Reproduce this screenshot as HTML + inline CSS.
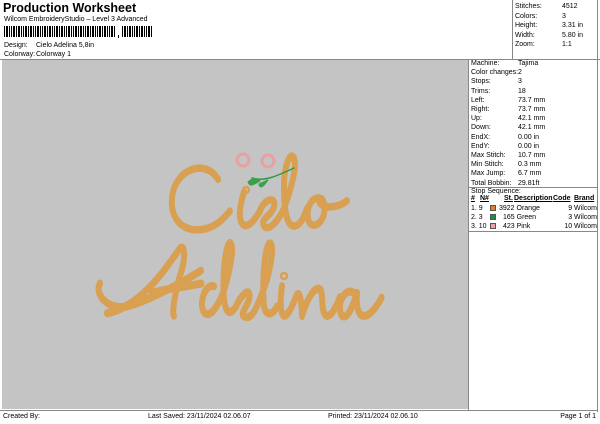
<!DOCTYPE html>
<html><head><style>
*{margin:0;padding:0;box-sizing:border-box}
body{width:600px;height:424px;background:#fff;font-family:"Liberation Sans",sans-serif;font-size:7px;color:#000;position:relative;overflow:hidden}
.a{position:absolute;white-space:nowrap}
</style></head><body>
<div class="a" style="left:3px;top:1px;font-size:12.5px;font-weight:bold">Production Worksheet</div>
<div class="a" style="left:4px;top:16px">Wilcom EmbroideryStudio – Level 3 Advanced</div>
<svg class="a" style="left:4px;top:26px" width="150" height="14">
<g fill="#000">
<rect x="0" y="0" width="1" height="11"/><rect x="2" y="0" width="2" height="11"/><rect x="5" y="0" width="1" height="11"/><rect x="7" y="0" width="1" height="11"/><rect x="9" y="0" width="2" height="11"/><rect x="12" y="0" width="1" height="11"/><rect x="14" y="0" width="2" height="11"/><rect x="17" y="0" width="1" height="11"/><rect x="19" y="0" width="1" height="11"/><rect x="21" y="0" width="2" height="11"/><rect x="24" y="0" width="1" height="11"/><rect x="26" y="0" width="2" height="11"/><rect x="29" y="0" width="1" height="11"/><rect x="31" y="0" width="1" height="11"/><rect x="33" y="0" width="2" height="11"/><rect x="36" y="0" width="1" height="11"/><rect x="38" y="0" width="1" height="11"/><rect x="40" y="0" width="2" height="11"/><rect x="43" y="0" width="1" height="11"/><rect x="45" y="0" width="2" height="11"/><rect x="48" y="0" width="1" height="11"/><rect x="50" y="0" width="1" height="11"/><rect x="52" y="0" width="2" height="11"/><rect x="55" y="0" width="1" height="11"/><rect x="57" y="0" width="2" height="11"/><rect x="60" y="0" width="1" height="11"/><rect x="62" y="0" width="1" height="11"/><rect x="64" y="0" width="2" height="11"/><rect x="67" y="0" width="1" height="11"/><rect x="69" y="0" width="1" height="11"/><rect x="71" y="0" width="2" height="11"/><rect x="74" y="0" width="1" height="11"/><rect x="76" y="0" width="2" height="11"/><rect x="79" y="0" width="1" height="11"/><rect x="81" y="0" width="1" height="11"/><rect x="83" y="0" width="2" height="11"/><rect x="86" y="0" width="1" height="11"/><rect x="88" y="0" width="2" height="11"/><rect x="91" y="0" width="1" height="11"/><rect x="93" y="0" width="1" height="11"/><rect x="95" y="0" width="2" height="11"/><rect x="98" y="0" width="1" height="11"/><rect x="100" y="0" width="2" height="11"/><rect x="103" y="0" width="1" height="11"/><rect x="105" y="0" width="1" height="11"/><rect x="107" y="0" width="2" height="11"/><rect x="110" y="0" width="1" height="11"/>
<rect x="114" y="9" width="1" height="3"/>
<rect x="118" y="0" width="1" height="11"/><rect x="120" y="0" width="2" height="11"/><rect x="123" y="0" width="1" height="11"/><rect x="125" y="0" width="2" height="11"/><rect x="128" y="0" width="1" height="11"/><rect x="130" y="0" width="1" height="11"/><rect x="132" y="0" width="2" height="11"/><rect x="135" y="0" width="1" height="11"/><rect x="137" y="0" width="2" height="11"/><rect x="140" y="0" width="1" height="11"/><rect x="142" y="0" width="1" height="11"/><rect x="144" y="0" width="2" height="11"/><rect x="147" y="0" width="1" height="11"/>
</g></svg>
<div class="a" style="left:4px;top:42px">Design:</div><div class="a" style="left:36px;top:42px">Cielo Adelina 5,8in</div>
<div class="a" style="left:4px;top:51px">Colorway:</div><div class="a" style="left:36px;top:51px">Colorway 1</div>
<div class="a" style="left:0;top:59px;width:600px;height:1px;background:#888"></div>
<div class="a" style="left:512px;top:0;width:1px;height:59px;background:#888"></div>
<div class="a" style="left:597px;top:0;width:1px;height:412px;background:#888"></div>
<div class="a" style="left:515px;top:2px;line-height:9.5px">Stitches:<br>Colors:<br>Height:<br>Width:<br>Zoom:</div>
<div class="a" style="left:562px;top:2px;line-height:9.5px">4512<br>3<br>3.31 in<br>5.80 in<br>1:1</div>
<div class="a" style="left:2px;top:60px;width:466px;height:349px;background:#c4c4c4"></div>
<div class="a" style="left:468px;top:60px;width:1px;height:350px;background:#888"></div>
<svg class="a" style="left:2px;top:60px" width="466" height="349">
<g fill="none" stroke-linecap="round" stroke-linejoin="round">
<g stroke="#d8a050" stroke-width="6" stroke-dasharray="1.3 1.4" transform="translate(0,-88.5) scale(1,1.26)">
<path d="M216 165 C205 150 180 155 172 172 C165 190 175 205 195 205 C210 205 220 198 228 190"/>
<path d="M242 175 C238 185 236 195 240 200 C245 205 252 198 258 190"/>
<path d="M258 190 C262 180 275 178 272 187 C268 195 258 196 262 202 C266 206 275 200 282 188 C290 170 295 155 292 148 C288 142 282 155 282 170 C282 190 285 202 292 202 C298 202 302 195 305 188"/>
<path d="M318 180 C308 178 302 192 308 200 C315 205 325 195 322 184 C320 178 316 180 318 184 C322 188 335 188 345 182"/>
</g>
<g stroke="#d8a050" stroke-width="6" stroke-dasharray="1.3 1.4" transform="translate(0,-138.3) scale(1,1.35)">
<path d="M98 268 C92 275 105 288 125 285 C150 280 185 265 200 258"/>
<path d="M105 290 C140 285 165 255 178 242 C183 238 184 250 178 262 C172 278 170 290 172 292"/>
<path d="M150 275 C165 272 185 270 200 268"/>
<path d="M212 270 C202 268 196 285 203 290 C210 294 220 280 225 265 C230 250 232 240 228 238 C224 238 220 260 222 280 C224 290 228 292 234 285"/>
<path d="M234 285 C240 275 250 270 247 280 C243 288 236 292 245 293 C252 293 258 280 265 265 C270 250 272 240 268 238 C262 240 260 270 262 285 C264 292 270 292 275 285"/>
<path d="M280 270 C278 280 278 290 282 292 C286 292 290 285 294 278 C298 270 300 285 300 292 C303 285 310 270 318 272 C322 276 318 290 325 292 C330 292 334 285 338 278"/>
<path d="M352 275 C342 270 334 285 340 292 C346 295 352 282 355 275 C354 285 356 292 362 292 C368 292 375 285 380 278"/>
</g>
<circle cx="244" cy="130" r="3" stroke="#d8a050" stroke-width="2.5" stroke-dasharray="1 1.2"/>
<circle cx="282" cy="216" r="3" stroke="#d8a050" stroke-width="2.5" stroke-dasharray="1 1.2"/>
<path d="M250 118 C262 122 275 116 292 108" stroke="#2e9a45" stroke-width="1.5"/>
<path d="M258 121 C252 124 248 128 246 122 C250 118 255 118 258 121Z M266 120 C262 126 258 130 257 124 Z" fill="#3aa04a" stroke="#3aa04a" stroke-width="1"/>
<circle cx="241" cy="100" r="6" stroke="#e8a0a0" stroke-width="3" stroke-dasharray="1.5 1.5"/>
<circle cx="266" cy="101" r="6" stroke="#e8a0a0" stroke-width="3" stroke-dasharray="1.5 1.5"/>
</g></svg>
<div class="a" style="left:471px;top:59px;line-height:9.2px">Machine:<br>Color changes:<br>Stops:<br>Trims:<br>Left:<br>Right:<br>Up:<br>Down:<br>EndX:<br>EndY:<br>Max Stitch:<br>Min Stitch:<br>Max Jump:<br>Total Bobbin:</div>
<div class="a" style="left:518px;top:59px;line-height:9.2px">Tajima<br>2<br>3<br>18<br>73.7 mm<br>73.7 mm<br>42.1 mm<br>42.1 mm<br>0.00 in<br>0.00 in<br>10.7 mm<br>0.3 mm<br>6.7 mm<br>29.81ft</div>
<div class="a" style="left:469px;top:187px;width:128px;height:1px;background:#888"></div>
<div class="a" style="left:471px;top:188px">Stop Sequence:</div>
<div class="a" style="left:471px;top:195px;font-weight:bold;width:126px;height:9px">
<span class="a" style="left:0;text-decoration:underline">#</span><span class="a" style="left:9px;text-decoration:underline">N#</span><span class="a" style="left:33px;text-decoration:underline">St.</span><span class="a" style="left:43px;text-decoration:underline">Description</span><span class="a" style="left:82px;text-decoration:underline">Code</span><span class="a" style="left:103px;text-decoration:underline">Brand</span></div>
<div class="a" style="left:471px;top:204px;line-height:9px;width:126px;height:30px">
<span class="a" style="left:0;top:0">1. 9</span><span class="a" style="left:19px;top:1px;width:6px;height:6px;background:#e0802a;border:1px solid #555"></span><span class="a" style="left:28px;top:0">3922 Orange</span><span class="a" style="right:0;top:0">9 Wilcom</span>
<span class="a" style="left:0;top:9px">2. 3</span><span class="a" style="left:19px;top:10px;width:6px;height:6px;background:#1a9040;border:1px solid #555"></span><span class="a" style="left:32px;top:9px">165 Green</span><span class="a" style="right:0;top:9px">3 Wilcom</span>
<span class="a" style="left:0;top:18px">3. 10</span><span class="a" style="left:19px;top:19px;width:6px;height:6px;background:#f0a0a8;border:1px solid #555"></span><span class="a" style="left:32px;top:18px">423 Pink</span><span class="a" style="right:0;top:18px">10 Wilcom</span></div>
<div class="a" style="left:469px;top:231px;width:128px;height:1px;background:#888"></div>
<div class="a" style="left:0;top:410px;width:598px;height:1px;background:#888"></div>
<div class="a" style="left:3px;top:413px">Created By:</div>
<div class="a" style="left:148px;top:413px">Last Saved: 23/11/2024 02.06.07</div>
<div class="a" style="left:328px;top:413px">Printed: 23/11/2024 02.06.10</div>
<div class="a" style="right:4px;top:413px">Page 1 of 1</div>
</body></html>
